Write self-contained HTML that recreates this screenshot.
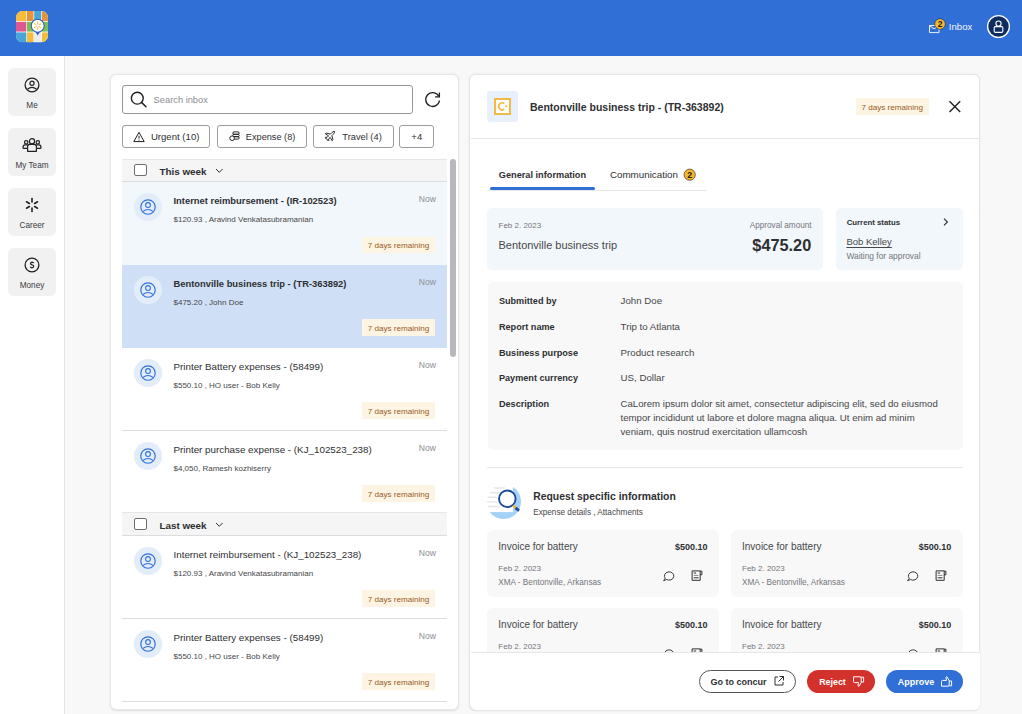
<!DOCTYPE html>
<html><head><meta charset="utf-8"><title>Inbox</title>
<style>
html,body{margin:0;padding:0;}
body{width:1022px;height:714px;position:relative;overflow:hidden;background:#f8f8f8;font-family:"Liberation Sans", sans-serif;}
.t{position:absolute;white-space:nowrap;font-family:"Liberation Sans", sans-serif;}
svg{overflow:visible;}
</style></head><body>
<div style="position:absolute;left:0.00px;top:0.00px;width:1022.00px;height:56.00px;background:#2f6fd6;"></div>
<svg style="position:absolute;left:16.00px;top:10.80px;" width="32" height="31.2" viewBox="0 0 32 31.2">
<defs><clipPath id="lc"><rect x="0" y="0" width="32" height="31.2" rx="6.5"/></clipPath></defs>
<g clip-path="url(#lc)">
<rect x="0" y="0" width="32" height="31.2" fill="#ffffff"/>
<rect x="0" y="0" width="10.3" height="10" fill="#f5bd3b"/>
<rect x="11" y="0" width="6.5" height="10" fill="#e8933b"/>
<rect x="18.2" y="0" width="7.1" height="10" fill="#4ba4d8"/>
<rect x="26" y="0" width="6" height="10" fill="#e8933b"/>
<rect x="0" y="10.8" width="10.3" height="9.8" fill="#df5790"/>
<rect x="11" y="10.8" width="6.5" height="9.8" fill="#7dbf4f"/>
<rect x="18.2" y="10.8" width="7.1" height="9.8" fill="#7dbf4f"/>
<rect x="26" y="10.8" width="6" height="9.8" fill="#7dbf4f"/>
<rect x="0" y="21.4" width="10.3" height="10.6" fill="#4ba4d8"/>
<rect x="11" y="21.4" width="6.5" height="10.6" fill="#f5bd3b"/>
<rect x="18.2" y="21.4" width="7.1" height="10.6" fill="#ececec"/>
<rect x="26" y="21.4" width="6" height="10.6" fill="#f5bd3b"/>
</g>
<path d="M19.2 20.2 L21.7 24.4 L24.2 20.2 Z" fill="#2a5fb8"/>
<circle cx="21.7" cy="14.7" r="6.5" fill="#ffffff" stroke="#2a5fb8" stroke-width="1.1"/>
<g stroke="#f5b72f" stroke-width="0.9" stroke-linecap="round">
<line x1="21.7" y1="10.9" x2="21.7" y2="13.1"/>
<line x1="21.7" y1="16.3" x2="21.7" y2="18.5"/>
<line x1="18.4" y1="12.8" x2="20.3" y2="13.9"/>
<line x1="23.1" y1="15.5" x2="25" y2="16.6"/>
<line x1="18.4" y1="16.6" x2="20.3" y2="15.5"/>
<line x1="23.1" y1="13.9" x2="25" y2="12.8"/>
</g>
</svg>
<svg style="position:absolute;left:928.00px;top:18.00px;" width="20" height="18" viewBox="0 0 20 18">
<path d="M1.5 7.5 H11 V14.6 H1.5 Z" fill="none" stroke="#e8eefa" stroke-width="1"/>
<path d="M1.5 7.8 L6 10.8 L8.5 9.3" fill="none" stroke="#e8eefa" stroke-width="1"/>
<circle cx="12" cy="6" r="5.3" fill="#f5b72f" stroke="#1a2b55" stroke-width="0.6"/>
<text x="12" y="9.3" font-family="Liberation Sans" font-weight="700" font-size="8.5" text-anchor="middle" fill="#1d1d1d">2</text>
</svg>
<div class="t" style="left:948.80px;top:22.00px;font-size:9.6px;line-height:9.6px;font-weight:400;color:#f2f5fb;">Inbox</div>
<svg style="position:absolute;left:986.00px;top:14.00px;" width="25" height="25" viewBox="0 0 25 25">
<circle cx="12.5" cy="12.5" r="10.9" fill="#0f2c5e" stroke="#ffffff" stroke-width="1.3"/>
<circle cx="12.5" cy="9.6" r="2.6" fill="none" stroke="#ffffff" stroke-width="1.1"/>
<rect x="8.2" y="12.6" width="8.6" height="5.8" rx="1.2" fill="none" stroke="#ffffff" stroke-width="1.1"/>
</svg>
<div style="position:absolute;left:0.00px;top:56.00px;width:65.00px;height:658.00px;background:#ffffff;border-right:1px solid #e3e4e6;box-sizing:border-box;"></div>
<div style="position:absolute;left:8.00px;top:68.00px;width:48.00px;height:48.00px;background:#f1f1f2;border-radius:6px;"></div>
<div class="t" style="left:-68.00px;width:200px;text-align:center;top:102.00px;font-size:8.2px;line-height:8.2px;font-weight:400;color:#3a3b3f;">Me</div>
<div style="position:absolute;left:8.00px;top:128.00px;width:48.00px;height:48.00px;background:#f1f1f2;border-radius:6px;"></div>
<div class="t" style="left:-68.00px;width:200px;text-align:center;top:162.00px;font-size:8.2px;line-height:8.2px;font-weight:400;color:#3a3b3f;">My Team</div>
<div style="position:absolute;left:8.00px;top:188.00px;width:48.00px;height:48.00px;background:#f1f1f2;border-radius:6px;"></div>
<div class="t" style="left:-68.00px;width:200px;text-align:center;top:222.00px;font-size:8.2px;line-height:8.2px;font-weight:400;color:#3a3b3f;">Career</div>
<div style="position:absolute;left:8.00px;top:248.00px;width:48.00px;height:48.00px;background:#f1f1f2;border-radius:6px;"></div>
<div class="t" style="left:-68.00px;width:200px;text-align:center;top:282.00px;font-size:8.2px;line-height:8.2px;font-weight:400;color:#3a3b3f;">Money</div>
<svg style="position:absolute;left:24.00px;top:76.50px;" width="16" height="16" viewBox="0 0 16 16">
<circle cx="8" cy="8" r="6.9" fill="none" stroke="#1f2023" stroke-width="1.3"/>
<circle cx="8" cy="6.3" r="2.1" fill="none" stroke="#1f2023" stroke-width="1.2"/>
<path d="M3.4 12.3 Q8 8.6 12.6 12.3" fill="none" stroke="#1f2023" stroke-width="1.2"/>
</svg>
<svg style="position:absolute;left:22.00px;top:137.00px;" width="20" height="16" viewBox="0 0 20 16">
<g fill="none" stroke="#1f2023" stroke-width="1.2" stroke-linejoin="round">
<circle cx="10" cy="4.2" r="2.6"/>
<circle cx="4.2" cy="5.3" r="1.7"/>
<circle cx="15.8" cy="5.3" r="1.7"/>
<path d="M5.6 14.3 V9.6 Q5.6 7.4 7.8 7.4 H12.2 Q14.4 7.4 14.4 9.6 V14.3 Z"/>
<path d="M5.6 11.3 H1.7 Q1 11.3 1 10.4 Q1 7.8 3.2 7.8 H5.8"/>
<path d="M14.4 11.3 H18.3 Q19 11.3 19 10.4 Q19 7.8 16.8 7.8 H14.2"/>
</g></svg>
<svg style="position:absolute;left:24.00px;top:197.00px;" width="16" height="16" viewBox="0 0 16 16">
<g stroke="#1f2023" stroke-width="1.6" stroke-linecap="round">
<line x1="8" y1="1.6" x2="8" y2="5"/>
<line x1="8" y1="11" x2="8" y2="14.4"/>
<line x1="2.5" y1="4.8" x2="5.4" y2="6.5"/>
<line x1="10.6" y1="9.5" x2="13.5" y2="11.2"/>
<line x1="2.5" y1="11.2" x2="5.4" y2="9.5"/>
<line x1="10.6" y1="6.5" x2="13.5" y2="4.8"/>
</g></svg>
<svg style="position:absolute;left:24.00px;top:256.70px;" width="16" height="16" viewBox="0 0 16 16">
<circle cx="8" cy="8" r="6.9" fill="none" stroke="#1f2023" stroke-width="1.3"/>
<path d="M9.7 6.1 Q9.3 5.3 8 5.3 Q6.5 5.3 6.5 6.5 Q6.5 7.5 8 7.8 Q9.7 8.1 9.7 9.4 Q9.7 10.6 8 10.6 Q6.7 10.6 6.2 9.7 M8 4.4 V5.3 M8 10.6 V11.5" fill="none" stroke="#1f2023" stroke-width="1.2"/>
</svg>
<div style="position:absolute;left:65.00px;top:56.00px;width:957.00px;height:658.00px;background:#f8f8f8;"></div>
<div style="position:absolute;left:110.00px;top:73.70px;width:348.50px;height:636.80px;background:#ffffff;border:1px solid #e6e6e7;border-radius:6px;box-sizing:border-box;box-shadow:0 0.5px 2px rgba(0,0,0,0.10);"></div>
<div style="position:absolute;left:122.00px;top:85.00px;width:290.50px;height:29.00px;border:1px solid #95969b;border-radius:3px;box-sizing:border-box;background:#fff;"></div>
<svg style="position:absolute;left:129.00px;top:90.00px;" width="20" height="20" viewBox="0 0 20 20">
<circle cx="8.3" cy="8.2" r="5.9" fill="none" stroke="#1f2023" stroke-width="1.4"/>
<line x1="12.5" y1="12.4" x2="17" y2="16.8" stroke="#1f2023" stroke-width="1.5" stroke-linecap="round"/>
</svg>
<div class="t" style="left:153.60px;top:96.00px;font-size:9.3px;line-height:9.3px;font-weight:400;color:#8d8e93;">Search inbox</div>
<svg style="position:absolute;left:424.00px;top:91.00px;" width="18" height="17" viewBox="0 0 18 17">
<path d="M14.7 5.2 A6.9 6.9 0 1 0 15.5 9.5" fill="none" stroke="#1f2023" stroke-width="1.3"/>
<path d="M15.4 1.6 V5.9 H11.1" fill="none" stroke="#1f2023" stroke-width="1.3"/>
</svg>
<div style="position:absolute;left:122.30px;top:125.00px;width:88.10px;height:23.00px;border:1px solid #9a9ba0;border-radius:3px;box-sizing:border-box;"></div>
<div class="t" style="left:150.90px;top:132.00px;font-size:9.6px;line-height:9.6px;font-weight:400;color:#2e2f32;">Urgent (10)</div>
<div style="position:absolute;left:217.30px;top:125.00px;width:89.60px;height:23.00px;border:1px solid #9a9ba0;border-radius:3px;box-sizing:border-box;"></div>
<div class="t" style="left:245.80px;top:133.00px;font-size:9.2px;line-height:9.2px;font-weight:400;color:#2e2f32;">Expense (8)</div>
<div style="position:absolute;left:313.20px;top:125.00px;width:80.50px;height:23.00px;border:1px solid #9a9ba0;border-radius:3px;box-sizing:border-box;"></div>
<div class="t" style="left:342.30px;top:133.00px;font-size:9.3px;line-height:9.3px;font-weight:400;color:#2e2f32;">Travel (4)</div>
<div style="position:absolute;left:399.20px;top:125.00px;width:34.50px;height:23.00px;border:1px solid #9a9ba0;border-radius:3px;box-sizing:border-box;"></div>
<div class="t" style="left:411.30px;top:132.00px;font-size:9.6px;line-height:9.6px;font-weight:400;color:#2e2f32;">+4</div>
<svg style="position:absolute;left:133.00px;top:130.50px;" width="12" height="12" viewBox="0 0 12 12">
<path d="M6 1.3 L11.2 10.6 H0.8 Z" fill="none" stroke="#1f2023" stroke-width="1" stroke-linejoin="round"/>
<line x1="6" y1="4.8" x2="6" y2="7.6" stroke="#1f2023" stroke-width="1"/>
<circle cx="6" cy="9" r="0.55" fill="#1f2023"/>
</svg>
<svg style="position:absolute;left:228.50px;top:131.00px;" width="12" height="11" viewBox="0 0 12 11">
<g fill="none" stroke="#1f2023" stroke-width="0.95">
<rect x="3.8" y="0.9" width="6.4" height="2.4" rx="1.2"/>
<rect x="3.8" y="3.3" width="6.4" height="2.4" rx="1.2"/>
<rect x="3.8" y="5.7" width="6.4" height="2.4" rx="1.2"/>
<circle cx="3.1" cy="7.2" r="2.3" fill="#fff"/>
</g></svg>
<svg style="position:absolute;left:324.20px;top:129.80px;" width="12" height="12" viewBox="0 0 12 12">
<path d="M10.6 1.4 Q9.2 1.2 7.6 2.8 L6.3 4.1 L2.2 3 L1.3 3.9 L4.6 5.8 L3.2 7.3 L1.6 7.2 L1 7.8 L2.9 9.1 L4.2 11 L4.8 10.4 L4.7 8.8 L6.2 7.4 L8.1 10.7 L9 9.8 L7.9 5.7 L9.2 4.4 Q10.8 2.8 10.6 1.4 Z" fill="none" stroke="#1f2023" stroke-width="0.95" stroke-linejoin="round"/>
</svg>
<div style="position:absolute;left:122.00px;top:158.80px;width:325.00px;height:23.30px;background:#f5f5f6;border-top:1px solid #e6e6e7;border-bottom:1px solid #dcdcde;box-sizing:border-box;"></div>
<div style="position:absolute;left:134.20px;top:164.10px;width:12.40px;height:12.40px;background:#fff;border:1px solid #6d6e72;border-radius:2px;box-sizing:border-box;"></div>
<div class="t" style="left:159.40px;top:167.00px;font-size:9.9px;line-height:9.9px;font-weight:700;color:#2e2f32;">This week</div>
<svg style="position:absolute;left:214.60px;top:167.80px;" width="9" height="6" viewBox="0 0 9 6"><path d="M1 1 L4.3 4.3 L7.6 1" fill="none" stroke="#2e2f32" stroke-width="1"/></svg>
<div style="position:absolute;left:122.00px;top:182.00px;width:325.00px;height:82.50px;background:#f2f7fb;"></div>
<svg style="position:absolute;left:133.60px;top:193.30px;" width="28" height="28" viewBox="0 0 28 28">
<circle cx="14" cy="14" r="14.1" fill="#e3edfa"/>
<circle cx="14" cy="14" r="7.2" fill="none" stroke="#2e6fd9" stroke-width="1.15"/>
<circle cx="14" cy="12" r="2.4" fill="none" stroke="#2e6fd9" stroke-width="1.05"/>
<path d="M8.9 18.4 Q14 14.6 19.1 18.4" fill="none" stroke="#2e6fd9" stroke-width="1.05"/>
</svg>
<div class="t" style="left:173.50px;top:196.00px;font-size:9.4px;line-height:9.4px;font-weight:700;color:#2e2f32;">Internet reimbursement - (IR-102523)</div>
<div class="t" style="left:173.50px;top:216.00px;font-size:8.0px;line-height:8.0px;font-weight:400;color:#46474a;">$120.93 , Aravind Venkatasubramanian</div>
<div class="t" style="right:586.00px;top:195.00px;font-size:8.6px;line-height:8.6px;font-weight:400;color:#8d8e93;">Now</div>
<div style="position:absolute;left:362.40px;top:236.60px;width:73.00px;height:16.50px;background:#fdf4e3;"></div>
<div class="t" style="left:367.70px;top:242.00px;font-size:8.1px;line-height:8.1px;font-weight:400;color:#9a5b1f;">7 days remaining</div>
<div style="position:absolute;left:122.00px;top:264.50px;width:325.00px;height:83.00px;background:#cfe0f6;"></div>
<svg style="position:absolute;left:133.60px;top:275.80px;" width="28" height="28" viewBox="0 0 28 28">
<circle cx="14" cy="14" r="14.1" fill="#e3edfa"/>
<circle cx="14" cy="14" r="7.2" fill="none" stroke="#2e6fd9" stroke-width="1.15"/>
<circle cx="14" cy="12" r="2.4" fill="none" stroke="#2e6fd9" stroke-width="1.05"/>
<path d="M8.9 18.4 Q14 14.6 19.1 18.4" fill="none" stroke="#2e6fd9" stroke-width="1.05"/>
</svg>
<div class="t" style="left:173.50px;top:279.00px;font-size:9.4px;line-height:9.4px;font-weight:700;color:#2e2f32;">Bentonville business trip - (TR-363892)</div>
<div class="t" style="left:173.50px;top:299.00px;font-size:8.0px;line-height:8.0px;font-weight:400;color:#46474a;">$475.20 , John Doe</div>
<div class="t" style="right:586.00px;top:278.00px;font-size:8.6px;line-height:8.6px;font-weight:400;color:#8d8e93;">Now</div>
<div style="position:absolute;left:362.40px;top:319.10px;width:73.00px;height:16.50px;background:#fdf4e3;"></div>
<div class="t" style="left:367.70px;top:325.00px;font-size:8.1px;line-height:8.1px;font-weight:400;color:#9a5b1f;">7 days remaining</div>
<div style="position:absolute;left:122.00px;top:347.50px;width:325.00px;height:83.00px;background:#ffffff;border-bottom:1px solid #dedee0;box-sizing:border-box;"></div>
<svg style="position:absolute;left:133.60px;top:358.80px;" width="28" height="28" viewBox="0 0 28 28">
<circle cx="14" cy="14" r="14.1" fill="#e3edfa"/>
<circle cx="14" cy="14" r="7.2" fill="none" stroke="#2e6fd9" stroke-width="1.15"/>
<circle cx="14" cy="12" r="2.4" fill="none" stroke="#2e6fd9" stroke-width="1.05"/>
<path d="M8.9 18.4 Q14 14.6 19.1 18.4" fill="none" stroke="#2e6fd9" stroke-width="1.05"/>
</svg>
<div class="t" style="left:173.50px;top:362.00px;font-size:9.8px;line-height:9.8px;font-weight:400;color:#2e2f32;">Printer Battery expenses - (58499)</div>
<div class="t" style="left:173.50px;top:382.00px;font-size:8.0px;line-height:8.0px;font-weight:400;color:#46474a;">$550.10 , HO user - Bob Kelly</div>
<div class="t" style="right:586.00px;top:361.00px;font-size:8.6px;line-height:8.6px;font-weight:400;color:#8d8e93;">Now</div>
<div style="position:absolute;left:362.40px;top:402.10px;width:73.00px;height:16.50px;background:#fdf4e3;"></div>
<div class="t" style="left:367.70px;top:408.00px;font-size:8.1px;line-height:8.1px;font-weight:400;color:#9a5b1f;">7 days remaining</div>
<div style="position:absolute;left:122.00px;top:430.50px;width:325.00px;height:82.00px;background:#ffffff;"></div>
<svg style="position:absolute;left:133.60px;top:441.80px;" width="28" height="28" viewBox="0 0 28 28">
<circle cx="14" cy="14" r="14.1" fill="#e3edfa"/>
<circle cx="14" cy="14" r="7.2" fill="none" stroke="#2e6fd9" stroke-width="1.15"/>
<circle cx="14" cy="12" r="2.4" fill="none" stroke="#2e6fd9" stroke-width="1.05"/>
<path d="M8.9 18.4 Q14 14.6 19.1 18.4" fill="none" stroke="#2e6fd9" stroke-width="1.05"/>
</svg>
<div class="t" style="left:173.50px;top:445.00px;font-size:9.8px;line-height:9.8px;font-weight:400;color:#2e2f32;">Printer purchase expense - (KJ_102523_238)</div>
<div class="t" style="left:173.50px;top:465.00px;font-size:8.0px;line-height:8.0px;font-weight:400;color:#46474a;">$4,050, Ramesh kozhiserry</div>
<div class="t" style="right:586.00px;top:444.00px;font-size:8.6px;line-height:8.6px;font-weight:400;color:#8d8e93;">Now</div>
<div style="position:absolute;left:362.40px;top:485.10px;width:73.00px;height:16.50px;background:#fdf4e3;"></div>
<div class="t" style="left:367.70px;top:491.00px;font-size:8.1px;line-height:8.1px;font-weight:400;color:#9a5b1f;">7 days remaining</div>
<div style="position:absolute;left:122.00px;top:512.00px;width:325.00px;height:23.80px;background:#f5f5f6;border-top:1px solid #e6e6e7;border-bottom:1px solid #dcdcde;box-sizing:border-box;"></div>
<div style="position:absolute;left:134.20px;top:518.00px;width:12.40px;height:12.40px;background:#fff;border:1px solid #6d6e72;border-radius:2px;box-sizing:border-box;"></div>
<div class="t" style="left:159.40px;top:521.00px;font-size:9.9px;line-height:9.9px;font-weight:700;color:#2e2f32;">Last week</div>
<svg style="position:absolute;left:214.90px;top:521.70px;" width="9" height="6" viewBox="0 0 9 6"><path d="M1 1 L4.3 4.3 L7.6 1" fill="none" stroke="#2e2f32" stroke-width="1"/></svg>
<div style="position:absolute;left:122.00px;top:535.80px;width:325.00px;height:83.00px;background:#ffffff;border-bottom:1px solid #dedee0;box-sizing:border-box;"></div>
<svg style="position:absolute;left:133.60px;top:547.10px;" width="28" height="28" viewBox="0 0 28 28">
<circle cx="14" cy="14" r="14.1" fill="#e3edfa"/>
<circle cx="14" cy="14" r="7.2" fill="none" stroke="#2e6fd9" stroke-width="1.15"/>
<circle cx="14" cy="12" r="2.4" fill="none" stroke="#2e6fd9" stroke-width="1.05"/>
<path d="M8.9 18.4 Q14 14.6 19.1 18.4" fill="none" stroke="#2e6fd9" stroke-width="1.05"/>
</svg>
<div class="t" style="left:173.50px;top:550.00px;font-size:9.8px;line-height:9.8px;font-weight:400;color:#2e2f32;">Internet reimbursement - (KJ_102523_238)</div>
<div class="t" style="left:173.50px;top:570.00px;font-size:8.0px;line-height:8.0px;font-weight:400;color:#46474a;">$120.93 , Aravind Venkatasubramanian</div>
<div class="t" style="right:586.00px;top:549.00px;font-size:8.6px;line-height:8.6px;font-weight:400;color:#8d8e93;">Now</div>
<div style="position:absolute;left:362.40px;top:590.40px;width:73.00px;height:16.50px;background:#fdf4e3;"></div>
<div class="t" style="left:367.70px;top:596.00px;font-size:8.1px;line-height:8.1px;font-weight:400;color:#9a5b1f;">7 days remaining</div>
<div style="position:absolute;left:122.00px;top:618.80px;width:325.00px;height:83.20px;background:#ffffff;border-bottom:1px solid #dedee0;box-sizing:border-box;"></div>
<svg style="position:absolute;left:133.60px;top:630.10px;" width="28" height="28" viewBox="0 0 28 28">
<circle cx="14" cy="14" r="14.1" fill="#e3edfa"/>
<circle cx="14" cy="14" r="7.2" fill="none" stroke="#2e6fd9" stroke-width="1.15"/>
<circle cx="14" cy="12" r="2.4" fill="none" stroke="#2e6fd9" stroke-width="1.05"/>
<path d="M8.9 18.4 Q14 14.6 19.1 18.4" fill="none" stroke="#2e6fd9" stroke-width="1.05"/>
</svg>
<div class="t" style="left:173.50px;top:633.00px;font-size:9.8px;line-height:9.8px;font-weight:400;color:#2e2f32;">Printer Battery expenses - (58499)</div>
<div class="t" style="left:173.50px;top:653.00px;font-size:8.0px;line-height:8.0px;font-weight:400;color:#46474a;">$550.10 , HO user - Bob Kelly</div>
<div class="t" style="right:586.00px;top:632.00px;font-size:8.6px;line-height:8.6px;font-weight:400;color:#8d8e93;">Now</div>
<div style="position:absolute;left:362.40px;top:673.40px;width:73.00px;height:16.50px;background:#fdf4e3;"></div>
<div class="t" style="left:367.70px;top:679.00px;font-size:8.1px;line-height:8.1px;font-weight:400;color:#9a5b1f;">7 days remaining</div>
<div style="position:absolute;left:449.80px;top:159.00px;width:5.80px;height:198.00px;background:#b7b8bb;border-radius:3px;"></div>
<div style="position:absolute;left:469.40px;top:73.70px;width:510.80px;height:636.60px;background:#ffffff;border:1px solid #e6e6e7;border-radius:6px;box-sizing:border-box;box-shadow:0 0.5px 2px rgba(0,0,0,0.10);overflow:hidden;"></div>
<div style="position:absolute;left:470.50px;top:137.60px;width:509.00px;height:1.00px;background:#e6e6e7;"></div>
<div style="position:absolute;left:487.20px;top:90.70px;width:31.00px;height:31.00px;background:#e8f0fb;border-radius:3px;"></div>
<svg style="position:absolute;left:494.00px;top:97.80px;" width="17" height="17" viewBox="0 0 17 17">
<rect x="1" y="1" width="15" height="15" fill="#ffffff" stroke="#f3b73a" stroke-width="1.9"/>
<path d="M10.3 5.6 A3.5 3.5 0 1 0 10.3 11.2" fill="none" stroke="#f3b73a" stroke-width="1.6"/>
<circle cx="12.1" cy="8.3" r="1" fill="#f3b73a"/>
</svg>
<div class="t" style="left:530.00px;top:102.00px;font-size:10.5px;line-height:10.5px;font-weight:700;color:#2e2f32;">Bentonville business trip - (TR-363892)</div>
<div style="position:absolute;left:855.70px;top:97.80px;width:73.30px;height:17.30px;background:#fdf4e3;"></div>
<div class="t" style="left:861.40px;top:104.00px;font-size:8.1px;line-height:8.1px;font-weight:400;color:#9a5b1f;">7 days remaining</div>
<svg style="position:absolute;left:947.00px;top:99.00px;" width="16" height="16" viewBox="0 0 16 16">
<path d="M2.5 2.3 L13.2 13 M13.2 2.3 L2.5 13" stroke="#1f2023" stroke-width="1.4"/>
</svg>
<div class="t" style="left:498.80px;top:171.00px;font-size:9.2px;line-height:9.2px;font-weight:700;color:#2e2f32;">General information</div>
<div class="t" style="left:609.90px;top:170.00px;font-size:9.8px;line-height:9.8px;font-weight:400;color:#2e2f32;">Communication</div>
<svg style="position:absolute;left:683.00px;top:167.50px;" width="14" height="14" viewBox="0 0 14 14">
<circle cx="6.7" cy="6.7" r="5.6" fill="#f5b72f" stroke="#3a3320" stroke-width="0.7"/>
<text x="6.7" y="9.9" font-family="Liberation Sans" font-weight="700" font-size="8.8" text-anchor="middle" fill="#1d1d1d">2</text>
</svg>
<div style="position:absolute;left:487.00px;top:189.80px;width:219.60px;height:1.00px;background:#e8e8e9;"></div>
<div style="position:absolute;left:489.90px;top:187.40px;width:105.20px;height:2.40px;background:#2f6fd6;border-radius:2px;"></div>
<div style="position:absolute;left:487.00px;top:207.60px;width:336.00px;height:62.30px;background:#f2f7fb;border-radius:5px;"></div>
<div class="t" style="left:498.50px;top:222.00px;font-size:8.0px;line-height:8.0px;font-weight:400;color:#74767c;">Feb 2. 2023</div>
<div class="t" style="left:498.50px;top:240.00px;font-size:11.0px;line-height:11.0px;font-weight:400;color:#46474a;">Bentonville business trip</div>
<div class="t" style="right:210.40px;top:222.00px;font-size:8.2px;line-height:8.2px;font-weight:400;color:#74767c;">Approval amount</div>
<div class="t" style="right:210.80px;top:237.00px;font-size:16.3px;line-height:16.3px;font-weight:700;color:#2e2f32;">$475.20</div>
<div style="position:absolute;left:835.70px;top:207.60px;width:127.30px;height:62.00px;background:#f2f7fb;border-radius:5px;"></div>
<div class="t" style="left:846.70px;top:219.00px;font-size:7.8px;line-height:7.8px;font-weight:700;color:#2e2f32;">Current status</div>
<svg style="position:absolute;left:941.00px;top:216.00px;" width="10" height="12" viewBox="0 0 10 12"><path d="M3 2.6 L6.4 6 L3 9.4" fill="none" stroke="#2e2f32" stroke-width="1.1"/></svg>
<div class="t" style="left:846.40px;top:237.00px;font-size:9.5px;line-height:9.5px;font-weight:400;color:#46474a;text-decoration:underline;text-underline-offset:1.5px;">Bob Kelley</div>
<div class="t" style="left:846.40px;top:252.00px;font-size:8.4px;line-height:8.4px;font-weight:400;color:#74767c;">Waiting for approval</div>
<div style="position:absolute;left:487.50px;top:282.00px;width:475.10px;height:168.00px;background:#f8f8f8;border-radius:5px;"></div>
<div class="t" style="left:498.90px;top:297.00px;font-size:9.15px;line-height:9.15px;font-weight:700;color:#2e2f32;">Submitted by</div>
<div class="t" style="left:620.60px;top:296.00px;font-size:9.7px;line-height:9.7px;font-weight:400;color:#46474a;">John Doe</div>
<div class="t" style="left:498.90px;top:323.00px;font-size:9.15px;line-height:9.15px;font-weight:700;color:#2e2f32;">Report name</div>
<div class="t" style="left:620.60px;top:322.00px;font-size:9.7px;line-height:9.7px;font-weight:400;color:#46474a;">Trip to Atlanta</div>
<div class="t" style="left:498.90px;top:349.00px;font-size:9.15px;line-height:9.15px;font-weight:700;color:#2e2f32;">Business purpose</div>
<div class="t" style="left:620.60px;top:348.00px;font-size:9.7px;line-height:9.7px;font-weight:400;color:#46474a;">Product research</div>
<div class="t" style="left:498.90px;top:374.00px;font-size:9.15px;line-height:9.15px;font-weight:700;color:#2e2f32;">Payment currency</div>
<div class="t" style="left:620.60px;top:373.00px;font-size:9.7px;line-height:9.7px;font-weight:400;color:#46474a;">US, Dollar</div>
<div class="t" style="left:498.90px;top:400.00px;font-size:9.15px;line-height:9.15px;font-weight:700;color:#2e2f32;">Description</div>
<div class="t" style="left:620.50px;top:399.00px;font-size:9.65px;line-height:9.65px;font-weight:400;color:#46474a;">CaLorem ipsum dolor sit amet, consectetur adipiscing elit, sed do eiusmod</div>
<div class="t" style="left:620.50px;top:413.00px;font-size:9.65px;line-height:9.65px;font-weight:400;color:#46474a;">tempor incididunt ut labore et dolore magna aliqua. Ut enim ad minim</div>
<div class="t" style="left:620.50px;top:427.00px;font-size:9.65px;line-height:9.65px;font-weight:400;color:#46474a;">veniam, quis nostrud exercitation ullamcosh</div>
<div style="position:absolute;left:487.00px;top:466.50px;width:475.60px;height:1.00px;background:#e6e6e7;"></div>
<svg style="position:absolute;left:482.00px;top:480.00px;" width="45" height="44" viewBox="0 0 45 44">
<circle cx="21.6" cy="21.6" r="17.4" fill="#a3d1f8"/>
<rect x="0" y="0" width="31.1" height="32.1" fill="#ffffff"/>
<g stroke="#e6e6e8" stroke-width="1.4" stroke-linecap="round">
<line x1="12.5" y1="8" x2="22.5" y2="8"/>
<line x1="8.5" y1="12.8" x2="17.5" y2="12.8"/>
<line x1="6.3" y1="17.3" x2="14.5" y2="17.3"/>
<line x1="5.6" y1="21.9" x2="14.5" y2="21.9"/>
<line x1="6.3" y1="26.5" x2="17.5" y2="26.5"/>
</g>
<circle cx="25.3" cy="18.8" r="8.3" fill="#ffffff" stroke="#1b4a9c" stroke-width="1.9"/>
<line x1="31.1" y1="25.4" x2="33.9" y2="28" stroke="#f2b430" stroke-width="2.6"/>
<line x1="33.6" y1="27.8" x2="37" y2="30.6" stroke="#1b4a9c" stroke-width="2.8"/>
</svg>
<div class="t" style="left:533.20px;top:492.00px;font-size:10.4px;line-height:10.4px;font-weight:700;color:#2e2f32;">Request specific information</div>
<div class="t" style="left:533.20px;top:509.00px;font-size:8.2px;line-height:8.2px;font-weight:400;color:#46474a;">Expense details , Attachments</div>
<div style="position:absolute;left:487.30px;top:530.40px;width:232.00px;height:66.30px;background:#f8f8f8;border-radius:6px;"></div>
<div class="t" style="left:498.30px;top:542.00px;font-size:10.0px;line-height:10.0px;font-weight:400;color:#46474a;">Invoice for battery</div>
<div class="t" style="right:314.40px;top:543.00px;font-size:9.0px;line-height:9.0px;font-weight:700;color:#2e2f32;">$500.10</div>
<div class="t" style="left:498.30px;top:565.00px;font-size:8.0px;line-height:8.0px;font-weight:400;color:#74767c;">Feb 2. 2023</div>
<div class="t" style="left:498.30px;top:579.00px;font-size:8.2px;line-height:8.2px;font-weight:400;color:#74767c;">XMA - Bentonville, Arkansas</div>
<svg style="position:absolute;left:661.80px;top:570.90px;" width="13" height="12" viewBox="0 0 13 12">
<path d="M3.2 7.3 L1.6 9.7 L4.6 8.5 A4.7 4.15 0 1 0 3.2 7.3 Z" fill="none" stroke="#2e2f32" stroke-width="0.95" stroke-linejoin="round"/>
</svg>
<svg style="position:absolute;left:689.80px;top:570.40px;" width="14" height="13" viewBox="0 0 14 13">
<g fill="none" stroke="#2e2f32" stroke-width="1" stroke-linejoin="round">
<path d="M2.1 0.9 H10.2 V10.3 H2.1 Z"/>
<path d="M10.2 1.2 H11.9 V4.8 H10.2"/>
<line x1="3.7" y1="3" x2="6.1" y2="3"/>
<line x1="3.7" y1="5.4" x2="8.5" y2="5.4" stroke="#8a8b8f"/>
<line x1="3.7" y1="7.8" x2="8.5" y2="7.8"/>
</g></svg>
<div style="position:absolute;left:731.00px;top:530.40px;width:232.00px;height:66.30px;background:#f8f8f8;border-radius:6px;"></div>
<div class="t" style="left:742.00px;top:542.00px;font-size:10.0px;line-height:10.0px;font-weight:400;color:#46474a;">Invoice for battery</div>
<div class="t" style="right:70.70px;top:543.00px;font-size:9.0px;line-height:9.0px;font-weight:700;color:#2e2f32;">$500.10</div>
<div class="t" style="left:742.00px;top:565.00px;font-size:8.0px;line-height:8.0px;font-weight:400;color:#74767c;">Feb 2. 2023</div>
<div class="t" style="left:742.00px;top:579.00px;font-size:8.2px;line-height:8.2px;font-weight:400;color:#74767c;">XMA - Bentonville, Arkansas</div>
<svg style="position:absolute;left:905.50px;top:570.90px;" width="13" height="12" viewBox="0 0 13 12">
<path d="M3.2 7.3 L1.6 9.7 L4.6 8.5 A4.7 4.15 0 1 0 3.2 7.3 Z" fill="none" stroke="#2e2f32" stroke-width="0.95" stroke-linejoin="round"/>
</svg>
<svg style="position:absolute;left:933.50px;top:570.40px;" width="14" height="13" viewBox="0 0 14 13">
<g fill="none" stroke="#2e2f32" stroke-width="1" stroke-linejoin="round">
<path d="M2.1 0.9 H10.2 V10.3 H2.1 Z"/>
<path d="M10.2 1.2 H11.9 V4.8 H10.2"/>
<line x1="3.7" y1="3" x2="6.1" y2="3"/>
<line x1="3.7" y1="5.4" x2="8.5" y2="5.4" stroke="#8a8b8f"/>
<line x1="3.7" y1="7.8" x2="8.5" y2="7.8"/>
</g></svg>
<div style="position:absolute;left:487.30px;top:608.20px;width:232.00px;height:66.30px;background:#f8f8f8;border-radius:6px;"></div>
<div class="t" style="left:498.30px;top:620.00px;font-size:10.0px;line-height:10.0px;font-weight:400;color:#46474a;">Invoice for battery</div>
<div class="t" style="right:314.40px;top:621.00px;font-size:9.0px;line-height:9.0px;font-weight:700;color:#2e2f32;">$500.10</div>
<div class="t" style="left:498.30px;top:643.00px;font-size:8.0px;line-height:8.0px;font-weight:400;color:#74767c;">Feb 2. 2023</div>
<div class="t" style="left:498.30px;top:657.00px;font-size:8.2px;line-height:8.2px;font-weight:400;color:#74767c;">XMA - Bentonville, Arkansas</div>
<svg style="position:absolute;left:661.80px;top:648.70px;" width="13" height="12" viewBox="0 0 13 12">
<path d="M3.2 7.3 L1.6 9.7 L4.6 8.5 A4.7 4.15 0 1 0 3.2 7.3 Z" fill="none" stroke="#2e2f32" stroke-width="0.95" stroke-linejoin="round"/>
</svg>
<svg style="position:absolute;left:689.80px;top:648.20px;" width="14" height="13" viewBox="0 0 14 13">
<g fill="none" stroke="#2e2f32" stroke-width="1" stroke-linejoin="round">
<path d="M2.1 0.9 H10.2 V10.3 H2.1 Z"/>
<path d="M10.2 1.2 H11.9 V4.8 H10.2"/>
<line x1="3.7" y1="3" x2="6.1" y2="3"/>
<line x1="3.7" y1="5.4" x2="8.5" y2="5.4" stroke="#8a8b8f"/>
<line x1="3.7" y1="7.8" x2="8.5" y2="7.8"/>
</g></svg>
<div style="position:absolute;left:731.00px;top:608.20px;width:232.00px;height:66.30px;background:#f8f8f8;border-radius:6px;"></div>
<div class="t" style="left:742.00px;top:620.00px;font-size:10.0px;line-height:10.0px;font-weight:400;color:#46474a;">Invoice for battery</div>
<div class="t" style="right:70.70px;top:621.00px;font-size:9.0px;line-height:9.0px;font-weight:700;color:#2e2f32;">$500.10</div>
<div class="t" style="left:742.00px;top:643.00px;font-size:8.0px;line-height:8.0px;font-weight:400;color:#74767c;">Feb 2. 2023</div>
<div class="t" style="left:742.00px;top:657.00px;font-size:8.2px;line-height:8.2px;font-weight:400;color:#74767c;">XMA - Bentonville, Arkansas</div>
<svg style="position:absolute;left:905.50px;top:648.70px;" width="13" height="12" viewBox="0 0 13 12">
<path d="M3.2 7.3 L1.6 9.7 L4.6 8.5 A4.7 4.15 0 1 0 3.2 7.3 Z" fill="none" stroke="#2e2f32" stroke-width="0.95" stroke-linejoin="round"/>
</svg>
<svg style="position:absolute;left:933.50px;top:648.20px;" width="14" height="13" viewBox="0 0 14 13">
<g fill="none" stroke="#2e2f32" stroke-width="1" stroke-linejoin="round">
<path d="M2.1 0.9 H10.2 V10.3 H2.1 Z"/>
<path d="M10.2 1.2 H11.9 V4.8 H10.2"/>
<line x1="3.7" y1="3" x2="6.1" y2="3"/>
<line x1="3.7" y1="5.4" x2="8.5" y2="5.4" stroke="#8a8b8f"/>
<line x1="3.7" y1="7.8" x2="8.5" y2="7.8"/>
</g></svg>
<div style="position:absolute;left:470.50px;top:652.00px;width:509.00px;height:57.50px;background:#ffffff;border-top:1px solid #e6e6e7;box-sizing:border-box;border-radius:0 0 6px 6px;"></div>
<div style="position:absolute;left:698.80px;top:669.50px;width:97.00px;height:23.20px;border:1px solid #55565a;border-radius:12px;box-sizing:border-box;background:#fff;"></div>
<div class="t" style="left:710.50px;top:678.00px;font-size:9.0px;line-height:9.0px;font-weight:700;color:#2e2f32;">Go to concur</div>
<svg style="position:absolute;left:773.00px;top:674.50px;" width="12" height="12" viewBox="0 0 12 12">
<g fill="none" stroke="#2e2f32" stroke-width="1">
<path d="M5 2 H2 V10 H10 V7"/>
<path d="M6.5 1.5 H10.5 V5.5 M10.5 1.5 L5.5 6.5"/>
</g></svg>
<div style="position:absolute;left:807.00px;top:669.50px;width:68.00px;height:23.20px;background:#d2312c;border-radius:12px;"></div>
<div class="t" style="left:819.20px;top:678.00px;font-size:8.9px;line-height:8.9px;font-weight:700;color:#ffffff;">Reject</div>
<svg style="position:absolute;left:851.50px;top:674.50px;" width="13" height="13" viewBox="0 0 13 13">
<path d="M1.5 1.8 H8 Q9.2 1.8 9.2 3 V7.4 L7 11.2 Q6.2 11.6 6 10.6 L6.5 7.6 H2.6 Q1.4 7.6 1.5 6.4 Z M9.2 2.2 H11.6 V7 H9.2" fill="none" stroke="#ffffff" stroke-width="1" stroke-linejoin="round"/>
</svg>
<div style="position:absolute;left:886.20px;top:669.50px;width:76.90px;height:23.20px;background:#2f6fd6;border-radius:12px;"></div>
<div class="t" style="left:897.80px;top:678.00px;font-size:9.0px;line-height:9.0px;font-weight:700;color:#ffffff;">Approve</div>
<svg style="position:absolute;left:940.00px;top:674.50px;" width="13" height="13" viewBox="0 0 13 13">
<path d="M1.5 11.2 H8 Q9.2 11.2 9.2 10 V5.6 L7 1.8 Q6.2 1.4 6 2.4 L6.5 5.4 H2.6 Q1.4 5.4 1.5 6.6 Z M9.2 10.8 H11.6 V6 H9.2" fill="none" stroke="#ffffff" stroke-width="1" stroke-linejoin="round" transform="translate(0,0)"/>
</svg>
</body></html>
